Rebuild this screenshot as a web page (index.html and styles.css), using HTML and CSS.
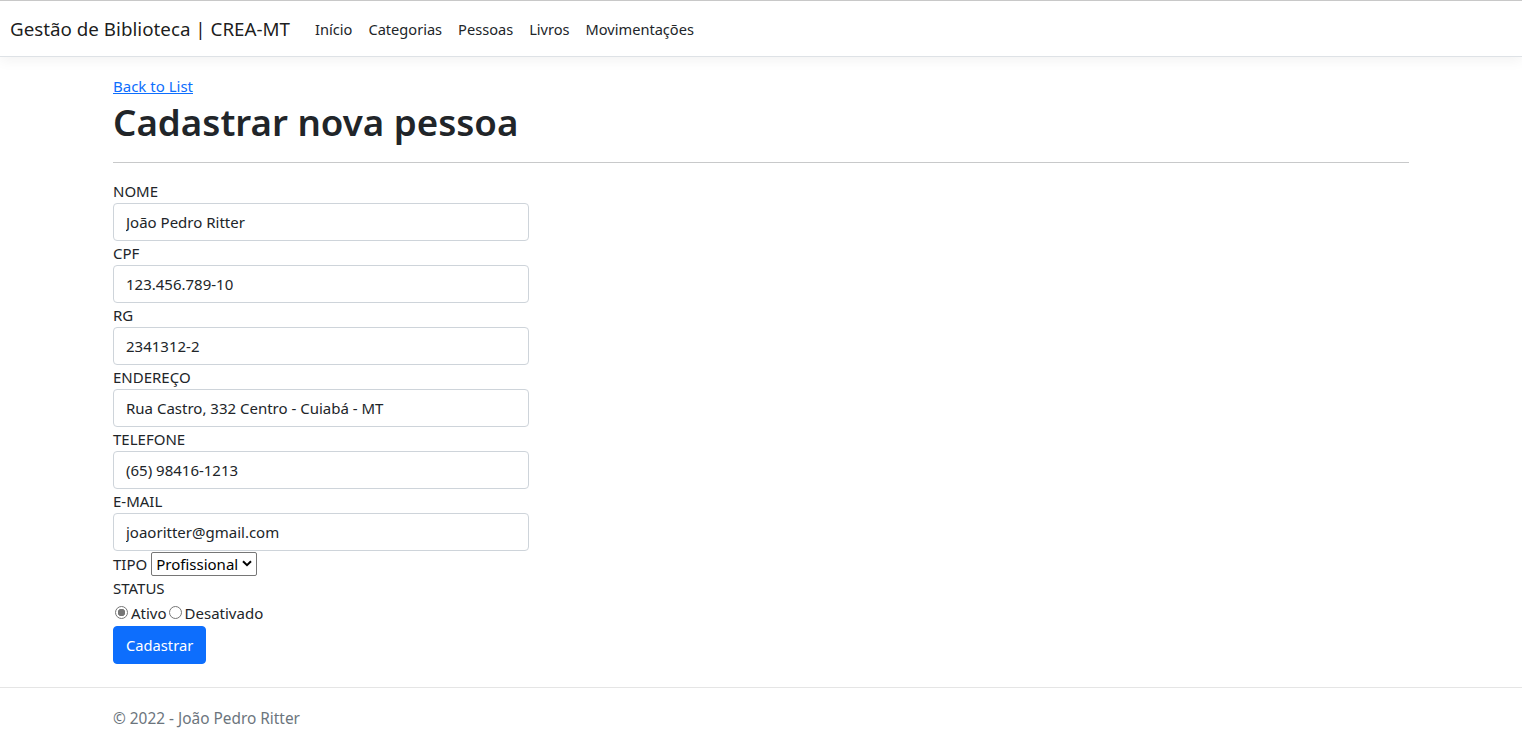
FILE: index.html
```html
<!DOCTYPE html>
<html lang="pt-br">
<head>
<meta charset="utf-8">
<title>Cadastrar nova pessoa - Gestão de Biblioteca</title>
<link rel="stylesheet" href="styles.css">
</head>
<body>
<header class="navbar">
  <a class="brand" href="#">Gestão de Biblioteca | CREA-MT</a>
  <nav class="nav">
    <a class="nav-link" href="#">Início</a>
    <a class="nav-link" href="#">Categorias</a>
    <a class="nav-link" href="#">Pessoas</a>
    <a class="nav-link" href="#">Livros</a>
    <a class="nav-link" href="#">Movimentações</a>
  </nav>
</header>
<main class="container">
  <a class="back" href="#">Back to List</a>
  <h1 class="title">Cadastrar nova pessoa</h1>
  <hr class="rule">
  <form class="form">
    <label class="label">NOME</label>
    <input class="input" type="text" value="João Pedro Ritter">
    <label class="label">CPF</label>
    <input class="input" type="text" value="123.456.789-10">
    <label class="label">RG</label>
    <input class="input" type="text" value="2341312-2">
    <label class="label">ENDEREÇO</label>
    <input class="input" type="text" value="Rua Castro, 332 Centro - Cuiabá - MT">
    <label class="label">TELEFONE</label>
    <input class="input" type="text" value="(65) 98416-1213">
    <label class="label">E-MAIL</label>
    <input class="input" type="text" value="joaoritter@gmail.com">
    <div class="tipo-row">
      <label class="label-inline">TIPO</label>
      <span class="select"><span class="select-text">Profissional</span><svg class="chev" viewBox="0 0 10 7" width="10" height="7"><path d="M1 1.2 L5 5.2 L9 1.2" fill="none" stroke="#000" stroke-width="2"/></svg></span>
    </div>
    <div class="label">STATUS</div>
    <div class="radio-row">
      <span class="radio checked"></span><span class="radio-text">Ativo</span><span class="radio"></span><span class="radio-text">Desativado</span>
    </div>
    <button class="btn" type="button">Cadastrar</button>
  </form>
</main>
<footer class="footer">
  <div class="footer-inner">© 2022 - João Pedro Ritter</div>
</footer>
</body>
</html>
```
FILE: styles.css
```css
* { box-sizing: border-box; }
html, body { margin: 0; padding: 0; }
body {
  font-family: "Noto Sans", "Open Sans", sans-serif;
  font-size: 15px;
  line-height: 24px;
  color: #212529;
  background: #fff;
  min-height: 100vh;
  display: flex;
  flex-direction: column;
}
.navbar {
  display: flex;
  align-items: center;
  height: 57px;
  border-top: 1px solid #c8c8c8;
  border-bottom: 1px solid #dee2e6;
  box-shadow: 0 4px 12px rgba(0,0,0,.05);
  padding: 0 10px;
  margin-bottom: 17px;
}
.brand {
  font-size: 18.8px;
  color: rgba(0,0,0,.9);
  text-decoration: none;
  margin-right: 17px;
  line-height: 30px;
}
.nav { display: flex; }
.nav-link {
  color: #212529;
  text-decoration: none;
  padding: 0 8px;
  font-size: 14.6px;
}
.container {
  width: 1296px;
  margin: 0 auto;
  padding-bottom: 16px;
  display: flex;
  flex-direction: column;
  align-items: flex-start;
}
.back {
  color: #0d6efd;
  text-decoration: underline;
  line-height: 24px;
}
.title {
  margin: 0;
  font-size: 36.7px;
  line-height: 48px;
  font-weight: 600;
}
.rule {
  align-self: stretch;
  margin: 16px 0;
  border: 0;
  border-top: 1px solid #c8c9ca;
}
.form {
  display: flex;
  flex-direction: column;
  align-items: flex-start;
  width: 416px;
}
.label { display: block; line-height: 24px; }
.input {
  width: 416px;
  height: 38px;
  padding: 6px 12px;
  font: inherit;
  font-size: 15px;
  color: #212529;
  border: 1px solid #ced4da;
  border-radius: 4px;
  background: #fff;
}
.tipo-row {
  display: flex;
  align-items: center;
  height: 25px;
  gap: 4px;
}
.select {
  display: inline-flex;
  align-items: center;
  height: 24px;
  border: 1px solid #767676;
  border-radius: 2px;
  padding: 0 4px 0 4px;
  gap: 3px;
  font-size: 15px;
  color: #000;
}
.chev { margin-left: 1px; }
.radio-row {
  display: flex;
  align-items: center;
  height: 25px;
}
.radio {
  width: 13px;
  height: 13px;
  border-radius: 50%;
  border: 1px solid #767676;
  margin: 0 1px 0 2px;
  background: #fff;
}
.radio.checked {
  border-color: #767676;
  background: radial-gradient(circle, #767676 0 3.5px, #fff 4px);
}
.radio-text { margin-left: 2px; }
.btn {
  margin-top: 1px;
  height: 38px;
  padding: 6px 12px;
  font: inherit;
  font-size: 14.7px;
  color: #fff;
  background: #0d6efd;
  border: 1px solid #0d6efd;
  border-radius: 4px;
}
.footer {
  margin-top: auto;
  border-top: 1px solid #e5e5e5;
  height: 61px;
  line-height: 62px;
  color: #6c757d;
}
.footer-inner {
  width: 1296px;
  margin: 0 auto;
  font-size: 15.4px;
}
```
